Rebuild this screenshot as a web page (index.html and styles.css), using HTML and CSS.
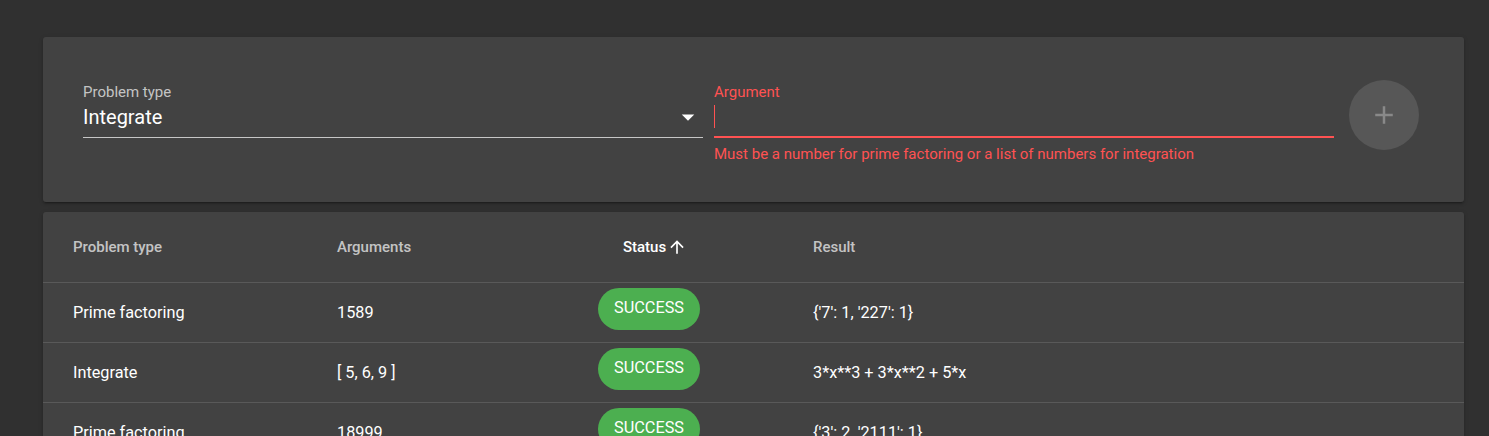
FILE: index.html
```html
<!DOCTYPE html>
<html lang="en">
<head>
<meta charset="utf-8">
<title>Problems</title>
<link rel="stylesheet" href="styles.css">
</head>
<body>
<main class="page">
  <section class="card form-card">
    <div class="field field-select">
      <label class="field-label">Problem type</label>
      <div class="field-input">
        <span class="field-value">Integrate</span>
        <svg class="drop-icon" viewBox="0 0 24 24" width="30" height="30"><path d="M7 10l5 5 5-5z" fill="#fff"/></svg>
      </div>
    </div>
    <div class="field field-error">
      <label class="field-label">Argument</label>
      <div class="field-input">
        <span class="caret"></span>
      </div>
      <div class="field-message">Must be a number for prime factoring or a list of numbers for integration</div>
    </div>
    <button class="fab" type="button" disabled>
      <svg viewBox="0 0 24 24" width="30" height="30"><path d="M19 13h-6v6h-2v-6H5v-2h6V5h2v6h6v2z" fill="rgba(255,255,255,0.3)"/></svg>
    </button>
  </section>

  <section class="card table-card">
    <div class="trow thead">
      <div class="cell">Problem type</div>
      <div class="cell">Arguments</div>
      <div class="cell cell-center active">Status<svg class="sort-icon" viewBox="0 0 24 24" width="20" height="20"><path d="M4 12l1.41 1.41L11 7.83V20h2V7.83l5.58 5.59L20 12l-8-8-8 8z" fill="#fff"/></svg></div>
      <div class="cell">Result</div>
    </div>
    <div class="trow">
      <div class="cell">Prime factoring</div>
      <div class="cell">1589</div>
      <div class="cell cell-chip"><span class="chip">SUCCESS</span></div>
      <div class="cell">{'7': 1, '227': 1}</div>
    </div>
    <div class="trow">
      <div class="cell">Integrate</div>
      <div class="cell">[ 5, 6, 9 ]</div>
      <div class="cell cell-chip"><span class="chip">SUCCESS</span></div>
      <div class="cell">3*x**3 + 3*x**2 + 5*x</div>
    </div>
    <div class="trow">
      <div class="cell">Prime factoring</div>
      <div class="cell">18999</div>
      <div class="cell cell-chip"><span class="chip">SUCCESS</span></div>
      <div class="cell">{'3': 2, '2111': 1}</div>
    </div>
  </section>
</main>
</body>
</html>
```

FILE: styles.css
```css
html, body {
  margin: 0;
  padding: 0;
  height: 100%;
  overflow: hidden;
  background: #303030;
  font-family: Roboto, "Liberation Sans", sans-serif;
  color: #fff;
}

.page {
  padding: 37px 25px 0 43px;
}

.card {
  background: #424242;
  border-radius: 3px;
  box-shadow: 0 3px 1px -2px rgba(0,0,0,.2), 0 2px 2px 0 rgba(0,0,0,.14), 0 1px 5px 0 rgba(0,0,0,.12);
}

.form-card {
  height: 165px;
  box-sizing: border-box;
  padding: 46px 45px 0 40px;
  display: flex;
  align-items: flex-start;
  gap: 11px;
}

.field {
  flex: 1 1 0;
  min-width: 0;
}

.field-label {
  display: block;
  font-size: 15px;
  line-height: 18px;
  height: 18px;
  color: rgba(255,255,255,0.7);
}

.field-input {
  display: flex;
  align-items: flex-start;
  height: 36px;
  border-bottom: 1px solid rgba(255,255,255,0.7);
}

.field-value {
  flex: 1;
  font-size: 20px;
  line-height: 24px;
  padding-top: 4px;
  color: #fff;
}

.drop-icon {
  display: block;
  margin-top: 1px;
}

.field-error .field-label {
  color: #ff5252;
}

.field-error .field-input {
  height: 35px;
  border-bottom: 2px solid #ff5252;
}

.caret {
  display: block;
  width: 1px;
  height: 23px;
  margin-top: 4px;
  background: #ff5252;
}

.field-message {
  margin-top: 7px;
  font-size: 15px;
  line-height: 18px;
  color: #ff5252;
  white-space: nowrap;
}

.fab {
  flex: 0 0 70px;
  width: 70px;
  height: 70px;
  margin: -3px 0 0 4px;
  padding: 0;
  border: none;
  border-radius: 50%;
  background: #575757;
  display: flex;
  align-items: center;
  justify-content: center;
}

.fab svg {
  display: block;
}

.table-card {
  margin-top: 10px;
  border-radius: 3px 3px 0 0;
}

.trow {
  display: grid;
  grid-template-columns: 264px 208px 268px 1fr;
  height: 60px;
  box-sizing: border-box;
  border-bottom: 1px solid rgba(255,255,255,0.12);
  font-size: 16.25px;
  color: #fff;
}

.thead {
  height: 71px;
  font-size: 15px;
  font-weight: 500;
  color: rgba(255,255,255,0.7);
}

.cell {
  display: flex;
  align-items: center;
  padding: 0 30px;
  white-space: nowrap;
}

.cell-center {
  justify-content: center;
  padding: 0 25px 0 37px;
}

.active {
  color: #fff;
}

.sort-icon {
  display: block;
  margin-left: 1px;
}

.cell-chip {
  justify-content: center;
  align-items: flex-start;
  padding-top: 5px;
}

.chip {
  display: inline-flex;
  align-items: center;
  height: 42px;
  padding: 0 16px 1px;
  box-sizing: border-box;
  border-radius: 21px;
  background: #4caf50;
  color: #fff;
  font-size: 16.25px;
  line-height: 1;
}
```
